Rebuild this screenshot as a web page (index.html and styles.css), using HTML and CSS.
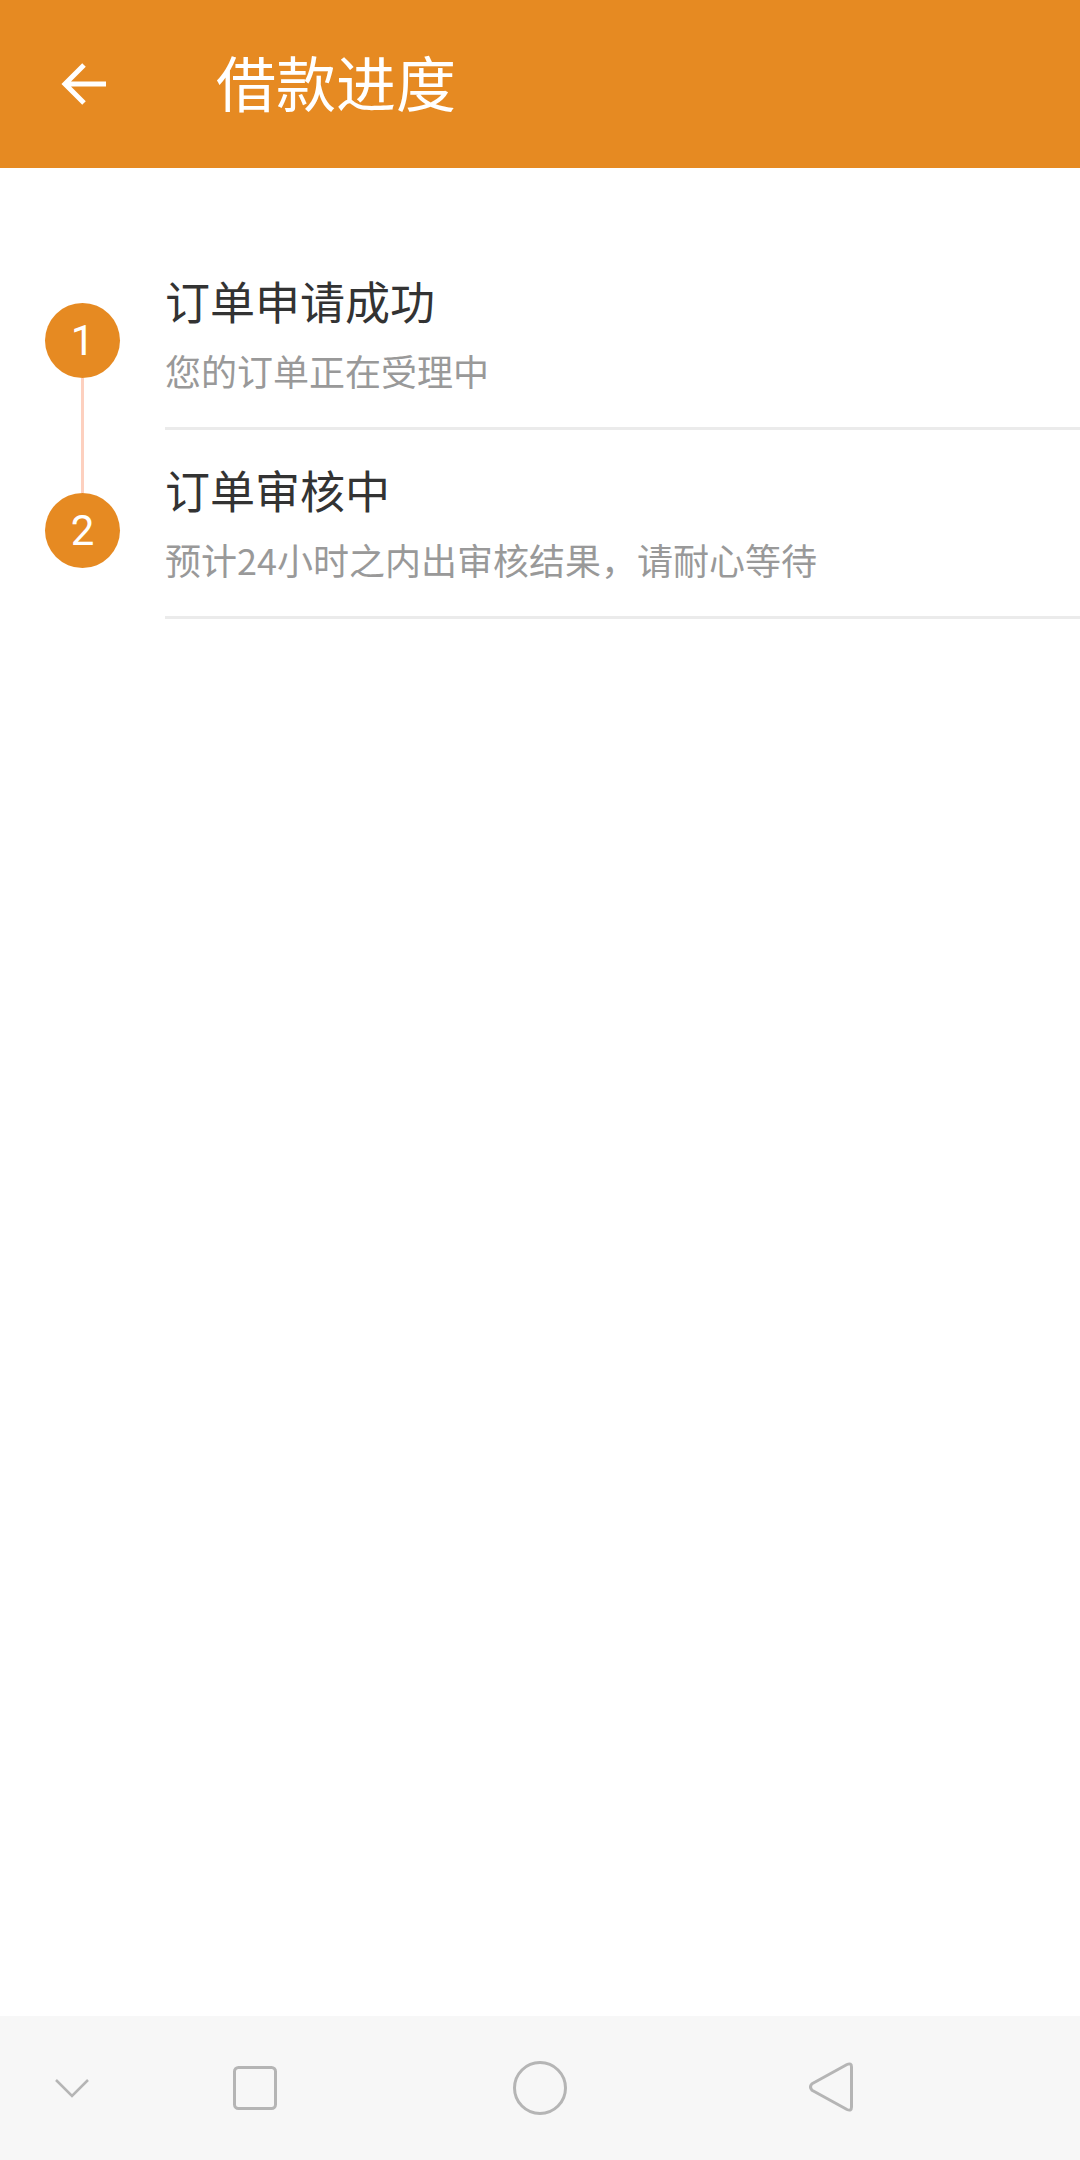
FILE: index.html
```html
<!DOCTYPE html>
<html lang="zh-CN">
<head>
<meta charset="utf-8">
<title>借款进度</title>
<link rel="stylesheet" href="styles.css">
</head>
<body>
<div class="screen">
  <header class="appbar">
    <div class="back">
      <svg width="48" height="48" viewBox="0 0 48 48"><path d="M46 24H5M24 5L5 24l19 19" fill="none" stroke="#fff" stroke-width="5"/></svg>
    </div>
    <div class="title">借款进度</div>
  </header>

  <main class="steps">
    <div class="step">
      <div class="marker">
        <div class="dot">1</div>
        <div class="line grow"></div>
      </div>
      <div class="content">
        <div class="step-title">订单申请成功</div>
        <div class="step-sub">您的订单正在受理中</div>
      </div>
    </div>
    <div class="step">
      <div class="marker">
        <div class="line top"></div>
        <div class="dot">2</div>
      </div>
      <div class="content">
        <div class="step-title">订单审核中</div>
        <div class="step-sub">预计24小时之内出审核结果，请耐心等待</div>
      </div>
    </div>
  </main>

  <nav class="navbar">
    <div class="nav-item nav-hide">
      <svg width="36" height="22" viewBox="0 0 36 22"><path d="M2 3l16 16L34 3" fill="none" stroke="#b5b5b5" stroke-width="2.5"/></svg>
    </div>
    <div class="nav-item nav-recent">
      <svg width="46" height="46" viewBox="0 0 46 46"><rect x="2.5" y="2.5" width="41" height="41" rx="4" fill="none" stroke="#b5b5b5" stroke-width="3"/></svg>
    </div>
    <div class="nav-item nav-home">
      <svg width="56" height="56" viewBox="0 0 56 56"><circle cx="28" cy="28" r="25.5" fill="none" stroke="#b5b5b5" stroke-width="3"/></svg>
    </div>
    <div class="nav-item nav-back">
      <svg width="48" height="54" viewBox="0 0 48 54"><path d="M40 4.5 L5 23.8 Q2 27 5 30.2 L40 49.5 Q44.5 51.5 44.5 47 V7 Q44.5 2.5 40 4.5 Z" fill="none" stroke="#b5b5b5" stroke-width="3" stroke-linejoin="round"/></svg>
    </div>
  </nav>
</div>
</body>
</html>
```

FILE: styles.css
```css
html, body {
  margin: 0;
  padding: 0;
  background: #ffffff;
}
body {
  font-family: "Noto Sans CJK SC", "Noto Sans", Roboto, sans-serif;
}
.screen {
  width: 1080px;
  height: 2160px;
  display: flex;
  flex-direction: column;
  overflow: hidden;
}
.appbar {
  height: 168px;
  flex: none;
  background: #e68a22;
  display: flex;
  align-items: center;
}
.back {
  width: 48px;
  height: 48px;
  margin-left: 60px;
  display: flex;
}
.title {
  margin-left: 108px;
  color: #ffffff;
  font-size: 60px;
  line-height: 60px;
  margin-top: -6px;
}
.steps {
  flex: 1;
  padding-top: 73px;
  display: flex;
  flex-direction: column;
}
.step {
  display: flex;
  height: 189px;
}
.marker {
  width: 165px;
  flex: none;
  display: flex;
  flex-direction: column;
  align-items: flex-start;
}
.dot {
  width: 75px;
  height: 75px;
  border-radius: 50%;
  background: #e68a22;
  color: #ffffff;
  font-family: Roboto, "Noto Sans", sans-serif;
  font-size: 42px;
  line-height: 75px;
  text-align: center;
  margin-left: 45px;
  flex: none;
}
.step:first-child .dot {
  margin-top: 62px;
}
.line {
  width: 3px;
  margin-left: 81px;
  background: #fdd0bf;
}
.line.grow {
  flex: 1;
}
.line.top {
  height: 63px;
  flex: none;
}
.content {
  flex: 1;
  border-bottom: 3px solid #ebebeb;
  padding-top: 30px;
  box-sizing: border-box;
}
.step-title {
  font-size: 45px;
  line-height: 60px;
  color: #333333;
}
.step-sub {
  margin-top: 15px;
  font-size: 36px;
  line-height: 48px;
  color: #999999;
}
.navbar {
  height: 144px;
  flex: none;
  background: #f7f7f7;
  position: relative;
}
.nav-item {
  position: absolute;
  display: flex;
}
.nav-hide { left: 54px; top: 61px; }
.nav-recent { left: 232px; top: 49px; }
.nav-home { left: 512px; top: 44px; }
.nav-back { left: 807px; top: 44px; }
```
